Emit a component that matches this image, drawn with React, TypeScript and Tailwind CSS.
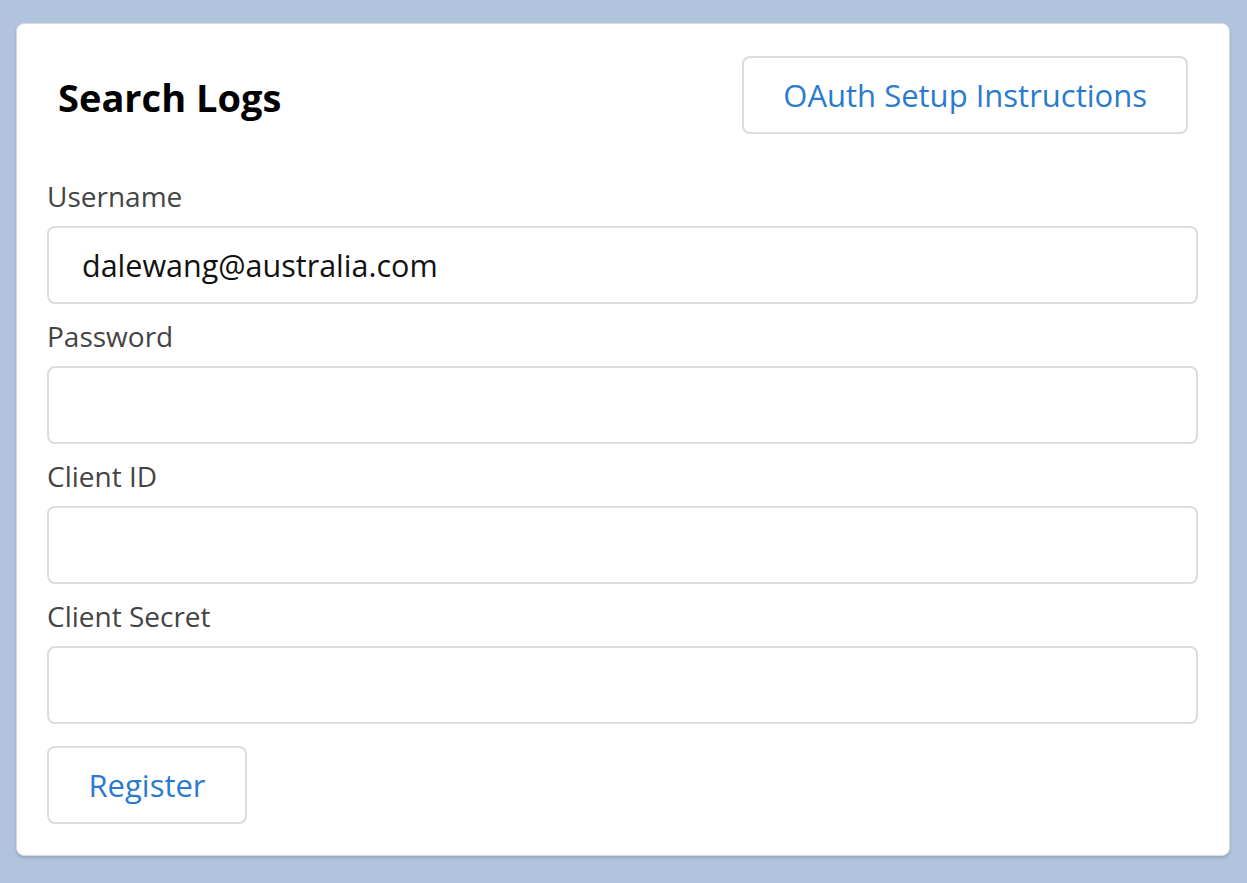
import { useState } from 'react';

const fields = [
  { label: 'Username', type: 'text', initial: 'dalewang@australia.com' },
  { label: 'Password', type: 'password', initial: '' },
  { label: 'Client ID', type: 'text', initial: '' },
  { label: 'Client Secret', type: 'password', initial: '' },
];

export default function App() {
  const [values, setValues] = useState(fields.map((f) => f.initial));

  return (
    <div
      className="min-h-screen bg-[#b0c4de] pl-[16px] pr-[17px] pt-[23px] pb-[26px]"
      style={{ fontFamily: '"Open Sans", "Noto Sans", sans-serif' }}
    >
      <div className="bg-white border border-[#d9d9d9] rounded-[8px] shadow-[0_2px_3px_rgba(0,0,0,0.15)] pl-[30px] pr-[31px] pt-[32px] pb-[31px]">
        <div className="flex items-center justify-between pl-[11px] pr-[10px]">
          <h1 className="text-[38px] font-bold text-black leading-none mt-[4px]">Search Logs</h1>
          <button className="h-[78px] px-[39px] border-2 border-[#dcdcdc] rounded-[8px] text-[31px] text-[#2a7bcf] bg-white">
            OAuth Setup Instructions
          </button>
        </div>

        <form className="mt-[42px] flex flex-col" onSubmit={(e) => e.preventDefault()}>
          {fields.map((f, i) => (
            <div key={f.label} className="flex flex-col">
              <label className="text-[28px] leading-[40px] text-[#444]">{f.label}</label>
              <input
                type={f.type}
                value={values[i]}
                onChange={(e) => {
                  const next = [...values];
                  next[i] = e.target.value;
                  setValues(next);
                }}
                className="mt-[10px] mb-[12px] h-[78px] w-full border-2 border-[#dcdcdc] rounded-[8px] px-[33px] text-[30.5px] text-[#111] outline-none"
              />
            </div>
          ))}
          <div className="mt-[10px]">
            <button
              type="submit"
              className="h-[78px] w-[200px] border-2 border-[#dcdcdc] rounded-[8px] text-[31px] text-[#2a7bcf] bg-white"
            >
              Register
            </button>
          </div>
        </form>
      </div>
    </div>
  );
}
